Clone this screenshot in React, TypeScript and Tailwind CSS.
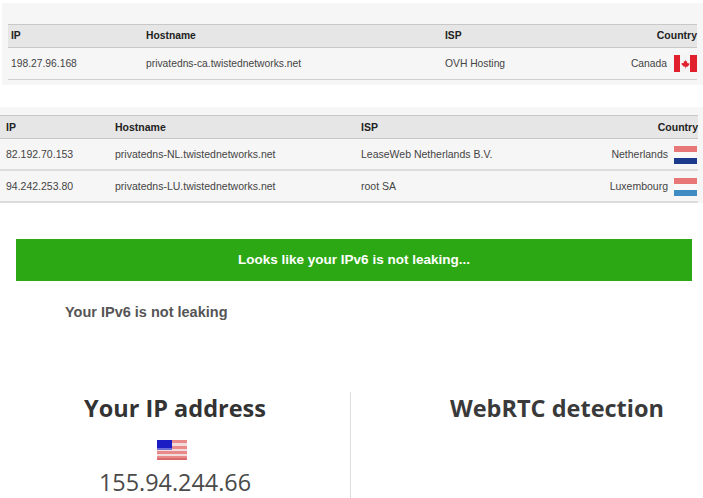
import React from 'react';

const Canada = () => (
    <svg width="23" height="17" viewBox="0 0 23 17" className="shrink-0">
        <rect width="23" height="17" fill="#f4f4f4" />
        <rect width="6" height="17" fill="#e0202c" />
        <rect x="16" width="7" height="17" fill="#e0202c" />
        <path d="M11.5 5l.8 1.6.9-.4-.3 2.2 1.1-.8.3.8 1.2-.2-.4 1.2.5.3-2 1.6-.1.7-1.7-.2V13.5h-.6v-1.9l-1.7.2-.1-.7-2-1.6.5-.3-.4-1.2 1.2.2.3-.8 1.1.8-.3-2.2.9.4z" fill="#e0202c" />
    </svg>
);

const Stripes: React.FC<{ top: string; bottom: string }> = ({ top, bottom }) => (
    <svg width="23" height="18" viewBox="0 0 23 18" className="shrink-0">
        <rect width="23" height="6" fill={top} />
        <rect y="6" width="23" height="6" fill="#f9f9f9" />
        <rect y="12" width="23" height="6" fill={bottom} />
    </svg>
);

const Usa = () => (
    <svg width="30" height="20" viewBox="0 0 30 20" className="ml-[157px] block">
        <rect width="30" height="20" fill="#e88a8a" />
        <rect y="3" width="30" height="3" fill="#f3dcdc" />
        <rect y="9" width="30" height="2" fill="#f3dcdc" />
        <rect y="14" width="30" height="2" fill="#f3dcdc" />
        <rect y="18" width="30" height="2" fill="#d96a6a" />
        <rect width="15" height="10" fill="#1c1cc4" />
        <rect y="8" width="15" height="2" fill="#6d6dd8" />
    </svg>
);

const rows1 = [
    { ip: '198.27.96.168', host: 'privatedns-ca.twistednetworks.net', isp: 'OVH Hosting', country: 'Canada', flag: <Canada /> },
];

const rows2 = [
    { ip: '82.192.70.153', host: 'privatedns-NL.twistednetworks.net', isp: 'LeaseWeb Netherlands B.V.', country: 'Netherlands', flag: <Stripes top="#e87878" bottom="#1c3a8c" /> },
    { ip: '94.242.253.80', host: 'privatedns-LU.twistednetworks.net', isp: 'root SA', country: 'Luxembourg', flag: <Stripes top="#e87878" bottom="#3f8cc4" /> },
];

const App: React.FC = () => {
    return (
        <div className="w-[703px] h-[498px] overflow-hidden bg-white font-['Liberation_Sans',sans-serif]">
            <div className="mt-[3px] ml-[2px] h-[82px] bg-[#f6f6f6] pl-[6px] pr-[6px] pt-[21px] text-[10.3px] text-[#444]">
                <div className="grid h-[24px] grid-cols-[135px_299px_1fr_auto] items-center border-y border-[#c8c8c8] bg-[#e6e6e6] pl-[3px] font-bold text-[#222]">
                    <div>IP</div>
                    <div>Hostname</div>
                    <div>ISP</div>
                    <div className="text-[10.5px]">Country</div>
                </div>
                {rows1.map((r) => (
                    <div key={r.ip} className="grid h-[32px] grid-cols-[135px_299px_1fr_auto] items-center border-b border-[#cfcfcf] pl-[3px]">
                        <div>{r.ip}</div>
                        <div>{r.host}</div>
                        <div>{r.isp}</div>
                        <div className="flex items-center gap-[7px]">
                            {r.country}
                            {r.flag}
                        </div>
                    </div>
                ))}
            </div>

            <div className="mt-[22px] h-[96px] bg-[#f6f6f6] pt-[8px] pr-[5px] text-[10.5px] text-[#444]">
                <div className="grid h-[24px] grid-cols-[109px_246px_1fr_auto] items-center border-y border-[#c8c8c8] bg-[#e6e6e6] pt-[1px] pl-[6px] font-bold text-[#222]">
                    <div>IP</div>
                    <div>Hostname</div>
                    <div>ISP</div>
                    <div>Country</div>
                </div>
                {rows2.map((r) => (
                    <div key={r.ip} className="grid h-[32px] grid-cols-[109px_246px_1fr_auto] items-center border-b-2 border-[#dcdcdc] pt-[1px] pr-[1px] pl-[6px]">
                        <div>{r.ip}</div>
                        <div>{r.host}</div>
                        <div>{r.isp}</div>
                        <div className="flex items-center gap-[6px]">
                            {r.country}
                            {r.flag}
                        </div>
                    </div>
                ))}
            </div>

            <div className="mx-[16px] mt-[36px] flex h-[42px] w-[676px] items-center justify-center bg-[#2ca814] text-[13.5px] font-bold text-white">
                Looks like your IPv6 is not leaking...
            </div>
            <p className="mt-[22px] ml-[65px] text-[14.5px] leading-[18px] font-bold text-[#555]">Your IPv6 is not leaking</p>

            <div className="mt-[71px] grid grid-cols-[350px_1fr] font-['Open_Sans',sans-serif]">
                <div className="h-[110px] text-center">
                    <h2 className="text-[23.5px] leading-[32px] font-bold text-[#333]">Your IP address</h2>
                    <div className="mt-[16px]"><Usa /></div>
                    <div className="mt-[6px] text-[23.4px] leading-[32px] text-[#4a4a4a]">155.94.244.66</div>
                </div>
                <div className="h-[110px] border-l border-[#ddd] pl-[60px] text-center">
                    <h2 className="text-[23.5px] leading-[32px] font-bold text-[#3a3a3a]">WebRTC detection</h2>
                </div>
            </div>
        </div>
    );
};

export default App;
